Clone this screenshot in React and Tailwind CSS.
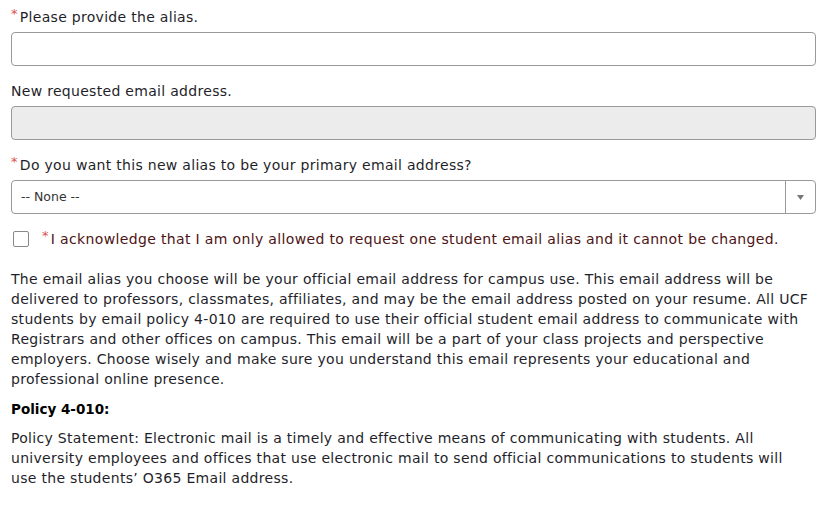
export default function App() {
  const font = { fontFamily: '"DejaVu Sans", sans-serif' };

  return (
    <div
      className="w-[836px] h-[513px] bg-white px-[11px] pt-[7px] text-[14px] tracking-[0.3px] leading-[20px] text-[#1f1f2b]"
      style={font}
    >
      <label className="flex items-start">
        <span className="text-[#d9534f] text-[13px] mr-[2px] mt-[-3px]">*</span>
        <span>Please provide the alias.</span>
      </label>
      <input
        type="text"
        className="block mt-[5px] w-[805px] h-[34px] border border-[#999] rounded-[4px] bg-white"
      />

      <div className="mt-[15px]">New requested email address.</div>
      <input
        type="text"
        disabled
        className="block mt-[5px] w-[805px] h-[34px] border border-[#999] rounded-[4px] bg-[#ececec]"
      />

      <label className="flex items-start mt-[15px]">
        <span className="text-[#d9534f] text-[13px] mr-[2px] mt-[-3px]">*</span>
        <span>Do you want this new alias to be your primary email address?</span>
      </label>
      <div className="mt-[5px] w-[805px] h-[34px] border border-[#999] rounded-[4px] flex items-stretch">
        <div className="flex-1 flex items-center pl-[9px] text-[12.5px] tracking-normal text-[#333]">-- None --</div>
        <div className="w-[30px] border-l border-[#999] flex items-center justify-center">
          <svg width="7" height="5" viewBox="0 0 7 5">
            <path d="M0 0h7L3.5 5z" fill="#777" />
          </svg>
        </div>
      </div>

      <div className="flex items-center mt-[17px] h-[16px]">
        <div className="w-[16px] h-[16px] ml-[2px] border border-[#888] rounded-[2px] bg-white" />
        <span className="text-[#d9534f] text-[13px] ml-[13px] mr-[2px] mt-[-7px]">*</span>
        <span className="text-[#4d1414] tracking-[0.35px]">
          I acknowledge that I am only allowed to request one student email alias and it cannot be changed.
        </span>
      </div>

      <div className="mt-[22px] whitespace-nowrap">
        <div>The email alias you choose will be your official email address for campus use. This email address will be</div>
        <div>delivered to professors, classmates, affiliates, and may be the email address posted on your resume. All UCF</div>
        <div>students by email policy 4-010 are required to use their official student email address to communicate with</div>
        <div>Registrars and other offices on campus. This email will be a part of your class projects and perspective</div>
        <div>employers. Choose wisely and make sure you understand this email represents your educational and</div>
        <div>professional online presence.</div>
      </div>

      <div className="mt-[10px] font-bold tracking-normal text-[13.5px] text-black">Policy 4-010:</div>

      <div className="mt-[9px] whitespace-nowrap">
        <div>Policy Statement: Electronic mail is a timely and effective means of communicating with students. All</div>
        <div>university employees and offices that use electronic mail to send official communications to students will</div>
        <div>use the students’ O365 Email address.</div>
      </div>
    </div>
  );
}
